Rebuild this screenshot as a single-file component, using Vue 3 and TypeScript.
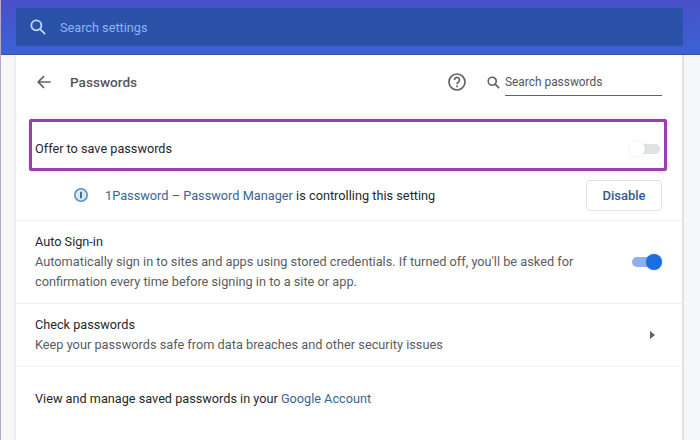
<script setup lang="ts">
</script>

<template>
  <div class="page">
    <header class="top">
      <div class="searchbar">
        <svg class="s-icon" width="20" height="20" viewBox="0 0 24 24" fill="none" stroke="#c4d8f8" stroke-width="2.2">
          <circle cx="10" cy="10" r="6" />
          <path d="M14.5 14.5 20.5 20.5" />
        </svg>
        <span class="s-text">Search settings</span>
      </div>
    </header>
    <main class="card">
      <div class="title-row">
        <svg class="back" width="20" height="20" viewBox="0 0 24 24" fill="none" stroke="#5f6368" stroke-width="2">
          <path d="M20 12H5M12 5l-7 7 7 7" />
        </svg>
        <h1 class="title">Passwords</h1>
        <svg class="help" width="20" height="20" viewBox="0 0 24 24" fill="none" stroke="#5f6368" stroke-width="2">
          <circle cx="12" cy="12" r="9.6" />
          <path d="M9 9.6a3 3 0 1 1 4.6 2.5c-1 .7-1.6 1.3-1.6 2.5" />
          <path d="M12 16.2v2" />
        </svg>
        <div class="pw-search">
          <svg width="15" height="15" viewBox="0 0 24 24" fill="none" stroke="#5f6368" stroke-width="2.6">
            <circle cx="10" cy="10" r="6.4" />
            <path d="M15 15l6 6" />
          </svg>
          <span class="pw-text">Search passwords</span>
        </div>
      </div>

      <div class="offer-row">
        <span class="label">Offer to save passwords</span>
        <span class="toggle off"><i class="track"></i><i class="knob"></i></span>
      </div>

      <div class="controlled-row">
        <svg class="info" width="16" height="16" viewBox="0 0 16 16">
          <circle cx="8" cy="8" r="6.2" fill="#dbe8f6" stroke="#5c8fc4" stroke-width="1.6" />
          <path d="M8 4.8v6.4" stroke="#44698f" stroke-width="1.9" />
        </svg>
        <span class="controlled-text"><span class="link">1Password – Password Manager</span> is controlling this setting</span>
        <button class="disable" type="button">Disable</button>
      </div>

      <div class="row signin">
        <div class="copy">
          <div class="label">Auto Sign-in</div>
          <div class="sub">Automatically sign in to sites and apps using stored credentials. If turned off, you'll be asked for confirmation every time before signing in to a site or app.</div>
        </div>
        <span class="toggle on"><i class="track"></i><i class="knob"></i></span>
      </div>

      <div class="row check">
        <div class="copy">
          <div class="label">Check passwords</div>
          <div class="sub">Keep your passwords safe from data breaches and other security issues</div>
        </div>
        <span class="arrow"></span>
      </div>

      <div class="row view">
        <span class="label">View and manage saved passwords in your <span class="link">Google Account</span></span>
      </div>
    </main>
    <div class="highlight"></div>
  </div>
</template>

<style>
html, body { margin: 0; padding: 0; }
</style>

<style scoped>
.page {
  position: relative;
  width: 700px;
  height: 440px;
  overflow: hidden;
  box-sizing: border-box;
  background: #f5f7f9;
  border-left: 1px solid #b9a9c9;
  font-family: Roboto, "Liberation Sans", sans-serif;
  color: #202124;
}
.top {
  height: 55px;
  box-sizing: border-box;
  padding: 8px 17px 8px 15px;
  background: linear-gradient(#4a50c8, #3a62d4);
  border-bottom: 1px solid #3d4fa8;
}
.searchbar {
  height: 38px;
  background: #2a52a8;
  display: flex;
  align-items: center;
  padding-left: 12px;
}
.s-text {
  margin-left: 12px;
  font-size: 12.7px;
  color: #8fb4f0;
}
.card {
  width: 666px;
  margin-left: 15px;
  height: 385px;
  background: #fff;
  border-right: 2px solid #dfe1e4;
  box-shadow: -2px 0 0 #eceef1;
  box-sizing: content-box;
}
.title-row {
  height: 54px;
  display: flex;
  align-items: center;
  padding: 0 20px 0 18px;
}
.back { flex: none; }
.title {
  margin: 0 0 0 16px;
  font-size: 13.6px;
  font-weight: 500;
  color: #55565a;
  flex: 1;
}
.help { margin-right: 19px; flex: none; }
.pw-search {
  display: flex;
  align-items: center;
  gap: 4px;
  margin-top: 1px;
}
.pw-text {
  display: block;
  width: 157px;
  height: 25px;
  line-height: 22px;
  box-sizing: border-box;
  border-bottom: 1px solid #5f6368;
  font-size: 11.9px;
  color: #54565a;
  margin-top: 1px;
}
.offer-row {
  height: 68px;
  padding: 12px 22px 0 19px;
  box-sizing: border-box;
  display: flex;
  align-items: center;
  justify-content: space-between;
}
.label {
  font-size: 12.7px;
  line-height: 18px;
  color: #26272a;
}
.toggle {
  position: relative;
  display: block;
  width: 31px;
  height: 16px;
  flex: none;
}
.track {
  position: absolute;
  left: 1px;
  right: 0;
  top: 3px;
  height: 10px;
  border-radius: 5px;
}
.knob {
  position: absolute;
  top: 0;
  width: 16px;
  height: 16px;
  border-radius: 50%;
}
.toggle.off .track { background: #dfe2e3; }
.toggle.off .knob {
  left: 0;
  background: #fff;
  box-shadow: 0 0 2px rgba(0, 0, 0, 0.12);
}
.toggle.on .track { background: #8fb0ea; }
.toggle.on .knob {
  right: 0;
  background: #1a6fe0;
  box-shadow: 0 0 2px rgba(26, 111, 224, 0.4);
}
.controlled-row {
  height: 34px;
  padding: 0 20px 0 57px;
  display: flex;
  align-items: center;
  margin: 1px 0 8px;
}
.controlled-text {
  margin-left: 16px;
  font-size: 12.75px;
  color: #26272a;
  flex: 1;
}
.link { color: #3a6592; }
.disable {
  width: 76px;
  height: 31px;
  margin: 0;
  padding: 0;
  border: 1px solid #dfe3e8;
  border-radius: 4px;
  background: #fff;
  color: #2f5d8f;
  font-family: inherit;
  font-size: 13px;
  font-weight: 500;
}
.row {
  box-sizing: border-box;
  border-top: 1px solid #eff0f1;
  padding: 0 20px 0 19px;
  display: flex;
  align-items: center;
  justify-content: space-between;
}
.signin { height: 83px; }
.check { height: 63px; padding-right: 27px; }
.view { height: 64px; }
.copy { width: 560px; }
.check .copy { padding-top: 1px; }
.signin .sub { margin-top: 1px; }
.check .sub { margin-top: 1px; }
.sub {
  margin-top: 2px;
  font-size: 12.75px;
  line-height: 19.5px;
  color: #5a5c60;
}
.arrow {
  width: 0;
  height: 0;
  border-left: 5px solid #5f6368;
  border-top: 4.5px solid transparent;
  border-bottom: 4.5px solid transparent;
}
.highlight {
  position: absolute;
  left: 28px;
  top: 119px;
  width: 638px;
  height: 52px;
  box-sizing: border-box;
  border: 3px solid #9a3fae;
  border-radius: 2px;
  box-shadow: 0 0 2px rgba(190, 90, 220, 0.4);
}
</style>
